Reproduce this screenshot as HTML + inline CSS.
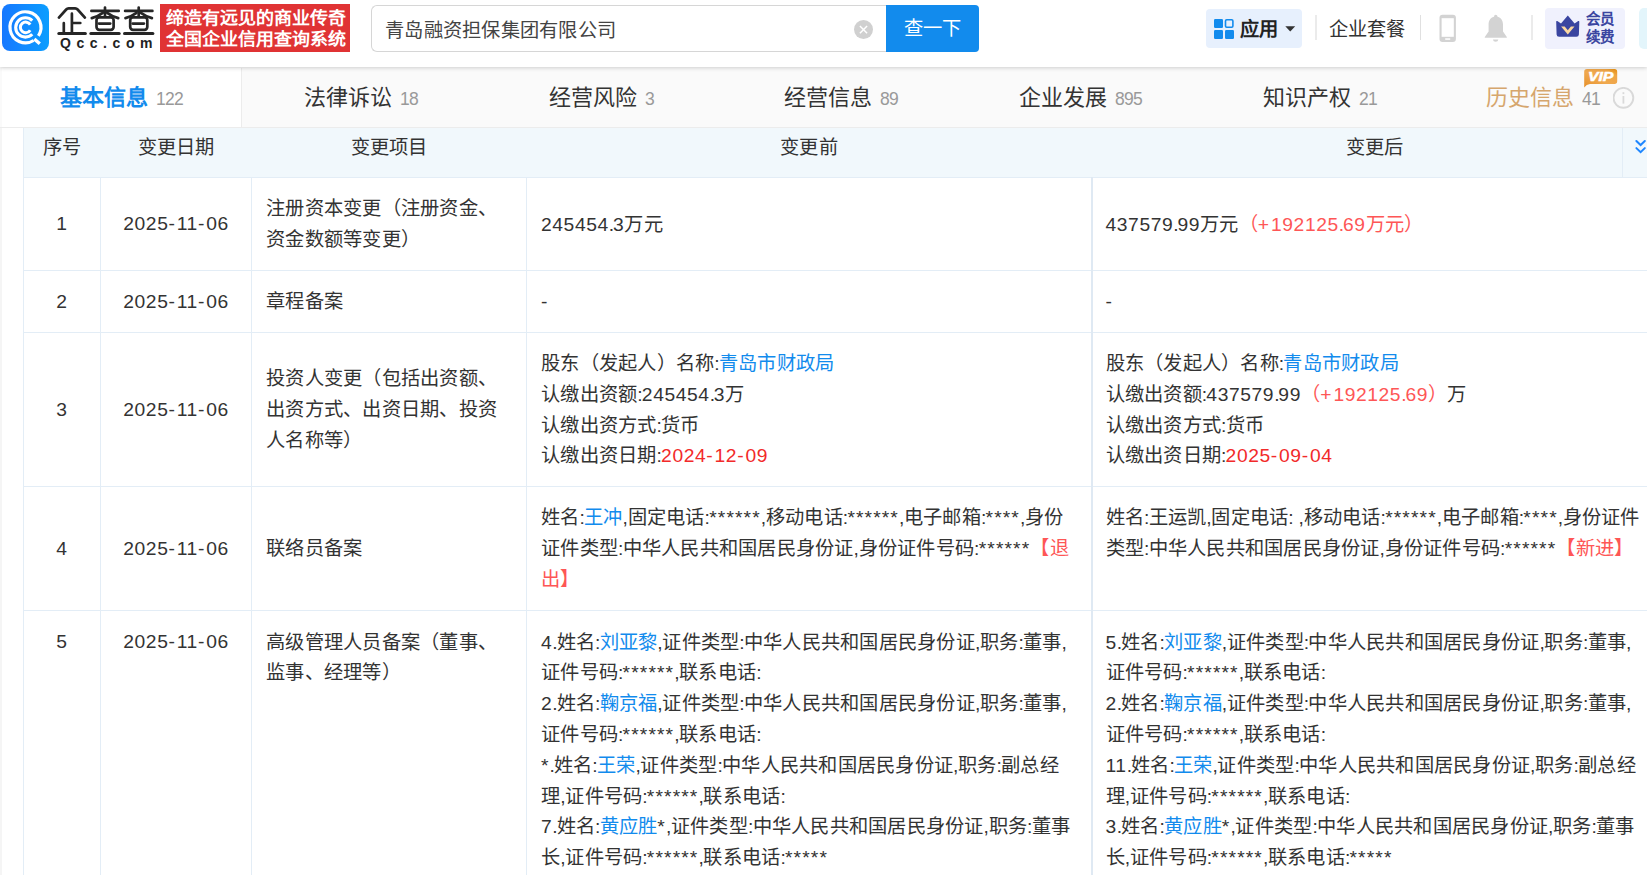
<!DOCTYPE html>
<html lang="zh-CN">
<head>
<meta charset="utf-8">
<title>qcc</title>
<style>
*{box-sizing:border-box;}
html,body{margin:0;padding:0;}
html{overflow:hidden;width:1647px;height:875px;}
#wrap{position:absolute;left:0;top:0;width:1647px;height:875px;overflow:hidden;contain:paint;}
body{width:1647px;height:875px;overflow:hidden;background:#fff;position:relative;
  font-family:"Liberation Sans",sans-serif;color:#333;font-size:19.25px;}
a{color:#128bed;text-decoration:none;}
.r{color:#fe5656;}
.r2{color:#f22a2a;}
i{font-style:normal;}
i.d{letter-spacing:.59px;}
i.h{letter-spacing:1.84px;}
i.u{letter-spacing:1.96px;}
i.p{letter-spacing:-1.15px;}
i.k{letter-spacing:-.75px;}
i.m{letter-spacing:-.35px;}
i.s{letter-spacing:1.1px;}
td.w{white-space:nowrap;}
td.w i{position:relative;top:0;}
/* ---------- header ---------- */
#hd{position:absolute;left:0;top:0;width:1647px;height:67px;background:#fff;z-index:5;
  box-shadow:0 1px 4px rgba(0,0,0,.18);}
#logoicon{position:absolute;left:2px;top:4px;width:47px;height:47px;border-radius:8px;
  background:linear-gradient(90deg,#1778ff 0%,#0b9eff 100%);}
#logotxt{position:absolute;left:56px;top:4px;width:100px;height:36px;font-size:32px;line-height:36px;
  font-weight:700;color:#2b2b2b;letter-spacing:0.5px;white-space:nowrap;transform:scaleY(.92);transform-origin:0 50%;}
#logosub{position:absolute;left:60px;top:35px;font-size:14px;line-height:16px;font-weight:bold;color:#222;
  letter-spacing:5.55px;white-space:nowrap;}
#slogan{position:absolute;left:160px;top:4px;width:190px;height:48px;background:#e03334;color:#fff;
  font-family:"Liberation Serif",serif;font-weight:600;font-size:18px;line-height:20.9px;padding:4px 0 0 6px;white-space:nowrap;}
#slogan span{display:block;height:20.9px;transform:scaleY(.92);}
#sbox{position:absolute;left:371px;top:5px;width:516px;height:47px;border:1px solid #d6d6d6;border-right:none;
  border-radius:6px 0 0 6px;background:#fff;}
#sbox span{position:absolute;left:13px;top:1.5px;line-height:45px;font-size:19.25px;color:#444;white-space:nowrap;letter-spacing:.25px;}
#sclear{position:absolute;left:854px;top:19.5px;width:19px;height:19px;border-radius:50%;background:#d0d0d0;}
#sbtn{position:absolute;left:886px;top:5px;width:93px;height:47px;background:#128bed;border-radius:0 4px 4px 0;
  color:#fff;font-size:19.25px;line-height:48px;text-align:center;letter-spacing:.25px;}
#app{position:absolute;left:1206px;top:9px;width:96px;height:39px;background:#e7f0fd;border-radius:4px;}
#app b{position:absolute;left:34px;top:1px;line-height:39px;font-size:19.25px;color:#222;}
.vsep{position:absolute;top:15px;width:1px;height:25px;background:#e0e0e0;}
#pkg{position:absolute;left:1329px;top:10.5px;line-height:38px;font-size:19.25px;color:#333;white-space:nowrap;}
#vipbtn{position:absolute;left:1545px;top:8px;width:80px;height:41px;background:#f0f1fd;border-radius:4px;}
#vipbtn span{position:absolute;left:38px;top:3px;font-size:14.5px;line-height:17.8px;font-weight:bold;color:#3a45a0;width:34px;text-align:center;}
/* ---------- tabs ---------- */
#tabs{position:absolute;left:0;top:67px;width:1647px;height:61px;background:#fafafa;border-bottom:1px solid #ececec;}
.tab{position:absolute;top:1px;height:59px;line-height:60px;font-size:22px;color:#333;white-space:nowrap;}
.tab i{font-style:normal;font-size:17.5px;color:#999;margin-left:8px;letter-spacing:-.7px;}
#tab0{left:2px;width:240px;background:#fff;border-right:1px solid #ececec;color:#128bed;font-weight:bold;}
/* ---------- table ---------- */
#strip{position:absolute;left:0;top:128px;width:23px;height:747px;background:#fff;border-left:2px solid #f5f5f5;}
table{position:absolute;left:23px;top:128px;width:1634px;border-collapse:collapse;table-layout:fixed;}
td,th{border:1px solid #e3edf6;padding:16.5px 14px 13.5px;line-height:30.8px;font-size:19.25px;font-weight:normal;letter-spacing:.25px;
  text-align:left;vertical-align:middle;color:#333;word-break:break-all;}
th{background:#f1f8fc;text-align:center;height:49px;padding:0;line-height:30px;padding-bottom:8px;border-top:none;border-left-color:#f1f8fc;border-right-color:#f1f8fc;}
th:first-child{border-left-color:#e3edf6;}
td.c{text-align:center;padding:16px 0 14px;}
td:nth-child(5){border-left:2px solid #dfe9f3;padding-left:13px;}
tr.top td{vertical-align:top;padding-top:17px;}
tr.top td.c{padding-top:16px;}
</style>
</head>
<body>
<div id="wrap">
<div id="hd">
  <div id="logoicon">
    <svg width="47" height="47" viewBox="0 0 47 47">
      <path d="M36.4 31.84 A15.5 15.5 0 1 0 31.6 36.5" fill="none" stroke="#fff" stroke-width="3.2"/>
      <path d="M32.3 35.0 L37.8 39.8" fill="none" stroke="#fff" stroke-width="3.4"/>
      <path d="M30.26 16.54 A9.7 9.7 0 1 0 30.26 30.26" fill="none" stroke="#fff" stroke-width="3.1"/>
      <path d="M28.19 20.59 A5.3 5.3 0 1 0 28.19 26.21" fill="none" stroke="#fff" stroke-width="3.0"/>
    </svg>
  </div>
  <svg id="logosvg" style="position:absolute;left:50px;top:0" width="112" height="40" viewBox="50 0 112 40" fill="none" stroke="#262626" stroke-width="2.7" stroke-linecap="round" stroke-linejoin="round"><path d="M58.9 17.6 L66.2 9.5 Q67.2 8.4 68.6 8.4 L75.2 8.4 Q76.6 8.4 77.6 9.5 L84.9 17.6"/><path d="M71.9 13.7 L71.9 33.3 M71.9 23 L80.3 23 M63.8 23.2 L63.8 33.3"/><path d="M58.8 33.5 L85.4 33.5" stroke-width="3"/><path d="M91.4 10.9 L118.7 10.9 M105 7.5 L105 16.6"/><path d="M102.8 12.8 Q98 16.4 91.8 18.1 M107.2 12.8 Q112 16.4 118.2 18.1"/><rect x="96.5" y="17.3" width="17.1" height="12.5" rx="2.8"/><path d="M99 23.6 L110.2 23.6"/><path d="M90.8 33.5 L119.2 33.5" stroke-width="3"/><path d="M125.1 10.9 L152.4 10.9 M138.7 7.5 L138.7 16.6"/><path d="M136.5 12.8 Q131.7 16.4 125.5 18.1 M140.9 12.8 Q145.7 16.4 151.9 18.1"/><rect x="130.2" y="17.3" width="17.1" height="12.5" rx="2.8"/><path d="M132.7 23.6 L143.9 23.6"/><path d="M124.5 33.5 L152.9 33.5" stroke-width="3"/></svg>
  <div id="logosub">Qcc.com</div>
  <div id="slogan"><span>缔造有远见的商业传奇</span><span>全国企业信用查询系统</span></div>
  <div id="sbox"><span>青岛融资担保集团有限公司</span></div>
  <div id="sclear"><svg width="19" height="19" viewBox="0 0 19 19"><path d="M5.9 6 L13.1 13.2 M13.1 6 L5.9 13.2" stroke="#fff" stroke-width="1.5"/></svg></div>
  <div id="sbtn">查一下</div>
  <div id="app">
    <svg style="position:absolute;left:8px;top:10px" width="20" height="20" viewBox="0 0 20 20">
      <rect x="0" y="0" width="9" height="9" rx="1.2" fill="#128bed"/>
      <rect x="11.5" y="0.8" width="7.4" height="7.4" rx="1.2" fill="#e7f0fd" stroke="#128bed" stroke-width="1.6"/>
      <rect x="0" y="11" width="9" height="9" rx="1.2" fill="#128bed"/>
      <rect x="11" y="11" width="9" height="9" rx="1.2" fill="#128bed"/>
    </svg>
    <b>应用</b>
    <svg style="position:absolute;left:79px;top:17px" width="11" height="6" viewBox="0 0 11 6"><path d="M0.3 0.2 L10.2 0.2 L5.25 5.4 Z" fill="#333"/></svg>
  </div>
  <div class="vsep" style="left:1315px;width:2px;background:#ebebeb"></div>
  <div id="pkg">企业套餐</div>
  <div class="vsep" style="left:1420px"></div>
  <svg style="position:absolute;left:1439px;top:14px" width="18" height="29" viewBox="0 0 18 29">
    <rect x="0.5" y="0.7" width="16.4" height="27.2" rx="3" fill="#d3d3d3"/>
    <rect x="2.6" y="4.2" width="12.2" height="18.6" fill="#fff"/>
    <rect x="6.2" y="24.3" width="5" height="1.5" fill="#fff"/>
  </svg>
  <svg style="position:absolute;left:1484px;top:14px" width="24" height="29" viewBox="0 0 24 29">
    <circle cx="11.7" cy="2.5" r="1.7" fill="#d3d3d3"/>
    <path d="M11.7 2.6 C6.8 2.6 4.6 6.5 4.6 10.5 L4.6 17.5 L0.8 22.9 L0.8 23.7 L22.8 23.7 L22.8 22.9 L19 17.5 L19 10.5 C19 6.5 16.8 2.6 11.7 2.6 Z" fill="#d3d3d3"/>
    <path d="M8.9 25.4 L14.4 25.4 Q14 27.7 11.65 27.7 Q9.3 27.7 8.9 25.4 Z" fill="#d3d3d3"/>
  </svg>
  <div class="vsep" style="left:1531px;width:2px;background:#ebebeb"></div>
  <div id="vipbtn">
    <svg style="position:absolute;left:10px;top:7px" width="26" height="23" viewBox="0 0 26 23">
      <path d="M12.8 0.6 L19.6 8.6 L23.2 6.1 Q24.4 5.5 24.3 6.9 L23.9 19.4 Q23.8 21.8 21.4 21.8 L4.1 21.8 Q1.7 21.8 1.6 19.4 L1.2 6.9 Q1.1 5.5 2.3 6.1 L6.0 8.6 Z" fill="#3a45a0"/>
      <path d="M6.1 11.4 L9.7 11.4 L12.8 15.3 L15.9 11.4 L19.5 11.4 L12.8 19.6 Z" fill="#fbd8a1"/>
    </svg>
    <span>会员续费</span>
  </div>
  <div style="position:absolute;left:1639px;top:8px;width:8px;height:41px;background:#e3f5fb;border-radius:5px 0 0 5px;"></div>
</div>

<div id="tabs">
  <div class="tab" id="tab0"><span style="position:absolute;left:58px">基本信息<i style="font-weight:normal">122</i></span></div>
  <div class="tab" style="left:304px">法律诉讼<i>18</i></div>
  <div class="tab" style="left:549px">经营风险<i>3</i></div>
  <div class="tab" style="left:784px">经营信息<i>89</i></div>
  <div class="tab" style="left:1019px">企业发展<i>895</i></div>
  <div class="tab" style="left:1263px">知识产权<i>21</i></div>
  <div class="tab" style="left:1486px;color:#d6a66d">历史信息<i>41</i></div>
  <svg style="position:absolute;left:1584px;top:2px" width="34" height="19" viewBox="0 0 34 19">
    <defs><linearGradient id="vg" x1="0" y1="1" x2="1" y2="0"><stop offset="0" stop-color="#e68f28"/><stop offset=".45" stop-color="#f0a94f"/><stop offset=".8" stop-color="#efa546"/><stop offset="1" stop-color="#e8900e"/></linearGradient></defs>
    <path d="M3 0 L30.5 0 Q33.2 0 33.2 2.7 L33.2 12.3 Q33.2 15 30.5 15 L6 15 Q2.5 15.3 0.2 18.6 L0.2 2.8 Q0.2 0 3 0 Z" fill="url(#vg)"/>
    <text x="16.7" y="12.1" text-anchor="middle" font-family="Liberation Sans, sans-serif" font-size="13" font-weight="bold" font-style="italic" fill="#fff" textLength="25.5" lengthAdjust="spacingAndGlyphs" stroke="#fff" stroke-width=".5">VIP</text>
  </svg>
  <svg style="position:absolute;left:1613px;top:20px" width="22" height="22" viewBox="0 0 22 22">
    <circle cx="10.4" cy="10.8" r="9.9" fill="none" stroke="#d9d9d9" stroke-width="1.9"/>
    <rect x="9.5" y="9" width="1.8" height="7.6" fill="#d9d9d9"/><rect x="9.5" y="5.2" width="1.8" height="1.9" fill="#d9d9d9"/>
  </svg>
</div>

<div id="strip"></div>
<table>
<colgroup><col style="width:77px"><col style="width:151px"><col style="width:275px"><col style="width:565px"><col style="width:566px"></colgroup>
<tr><th>序号</th><th>变更日期</th><th>变更项目</th><th>变更前</th><th>变更后</th></tr>
<tr style="height:93px"><td class="c"><i class="d">1</i></td><td class="c"><i class="d">2025</i><i class="h">-</i><i class="d">11</i><i class="h">-</i><i class="d">06</i></td><td>注册资本变更（注册资金、<br>资金数额等变更）</td><td class="w"><i class="d">245454</i><i class="p">.</i><i class="d">3</i>万元</td><td class="w"><i class="d">437579</i><i class="p">.</i><i class="d">99</i>万元<span class="r">（<i class="u">+</i><i class="d">192125</i><i class="p">.</i><i class="d">69</i>万元）</span></td></tr>
<tr style="height:62px"><td class="c"><i class="d">2</i></td><td class="c"><i class="d">2025</i><i class="h">-</i><i class="d">11</i><i class="h">-</i><i class="d">06</i></td><td>章程备案</td><td class="w"><i class="h">-</i></td><td class="w"><i class="h">-</i></td></tr>
<tr style="height:154px"><td class="c"><i class="d">3</i></td><td class="c"><i class="d">2025</i><i class="h">-</i><i class="d">11</i><i class="h">-</i><i class="d">06</i></td><td>投资人变更（包括出资额、<br>出资方式、出资日期、投资<br>人名称等）</td><td class="w">股东（发起人）名称<i class="k">:</i><a>青岛市财政局</a><br>认缴出资额<i class="k">:</i><i class="d">245454</i><i class="p">.</i><i class="d">3</i>万<br>认缴出资方式<i class="k">:</i>货币<br>认缴出资日期<i class="k">:</i><span class="r2"><i class="d">2024</i><i class="h">-</i><i class="d">12</i><i class="h">-</i><i class="d">09</i></span></td><td class="w">股东（发起人）名称<i class="k">:</i><a>青岛市财政局</a><br>认缴出资额<i class="k">:</i><i class="d">437579</i><i class="p">.</i><i class="d">99</i><span class="r">（<i class="u">+</i><i class="d">192125</i><i class="p">.</i><i class="d">69</i>）</span>万<br>认缴出资方式<i class="k">:</i>货币<br>认缴出资日期<i class="k">:</i><span class="r2"><i class="d">2025</i><i class="h">-</i><i class="d">09</i><i class="h">-</i><i class="d">04</i></span></td></tr>
<tr style="height:124px"><td class="c"><i class="d">4</i></td><td class="c"><i class="d">2025</i><i class="h">-</i><i class="d">11</i><i class="h">-</i><i class="d">06</i></td><td>联络员备案</td><td class="w">姓名<i class="k">:</i><a>王冲</a><i class="m">,</i>固定电话<i class="k">:</i><i class="s">******</i><i class="m">,</i>移动电话<i class="k">:</i><i class="s">******</i><i class="m">,</i>电子邮箱<i class="k">:</i><i class="s">****</i><i class="m">,</i>身份<br>证件类型<i class="k">:</i>中华人民共和国居民身份证<i class="m">,</i>身份证件号码<i class="k">:</i><i class="s">******</i><span class="r">【退</span><br><span class="r">出】</span></td><td class="w">姓名<i class="k">:</i>王运凯<i class="m">,</i>固定电话<i class="k">:</i> <i class="m">,</i>移动电话<i class="k">:</i><i class="s">******</i><i class="m">,</i>电子邮箱<i class="k">:</i><i class="s">****</i><i class="m">,</i>身份证件<br>类型<i class="k">:</i>中华人民共和国居民身份证<i class="m">,</i>身份证件号码<i class="k">:</i><i class="s">******</i><span class="r">【新进】</span><br>&nbsp;</td></tr>
<tr class="top" style="height:300px"><td class="c"><i class="d">5</i></td><td class="c"><i class="d">2025</i><i class="h">-</i><i class="d">11</i><i class="h">-</i><i class="d">06</i></td><td>高级管理人员备案（董事、<br>监事、经理等）</td><td class="w"><i class="d">4</i><i class="p">.</i>姓名<i class="k">:</i><a>刘亚黎</a><i class="m">,</i>证件类型<i class="k">:</i>中华人民共和国居民身份证<i class="m">,</i>职务<i class="k">:</i>董事<i class="m">,</i><br>证件号码<i class="k">:</i><i class="s">******</i><i class="m">,</i>联系电话<i class="k">:</i><br><i class="d">2</i><i class="p">.</i>姓名<i class="k">:</i><a>鞠京福</a><i class="m">,</i>证件类型<i class="k">:</i>中华人民共和国居民身份证<i class="m">,</i>职务<i class="k">:</i>董事<i class="m">,</i><br>证件号码<i class="k">:</i><i class="s">******</i><i class="m">,</i>联系电话<i class="k">:</i><br><i class="s">*</i><i class="p">.</i>姓名<i class="k">:</i><a>王荣</a><i class="m">,</i>证件类型<i class="k">:</i>中华人民共和国居民身份证<i class="m">,</i>职务<i class="k">:</i>副总经<br>理<i class="m">,</i>证件号码<i class="k">:</i><i class="s">******</i><i class="m">,</i>联系电话<i class="k">:</i><br><i class="d">7</i><i class="p">.</i>姓名<i class="k">:</i><a>黄应胜</a><i class="s">*</i><i class="m">,</i>证件类型<i class="k">:</i>中华人民共和国居民身份证<i class="m">,</i>职务<i class="k">:</i>董事<br>长<i class="m">,</i>证件号码<i class="k">:</i><i class="s">******</i><i class="m">,</i>联系电话<i class="k">:</i><i class="s">*****</i><br>&nbsp;<br>&nbsp;</td><td class="w"><i class="d">5</i><i class="p">.</i>姓名<i class="k">:</i><a>刘亚黎</a><i class="m">,</i>证件类型<i class="k">:</i>中华人民共和国居民身份证<i class="m">,</i>职务<i class="k">:</i>董事<i class="m">,</i><br>证件号码<i class="k">:</i><i class="s">******</i><i class="m">,</i>联系电话<i class="k">:</i><br><i class="d">2</i><i class="p">.</i>姓名<i class="k">:</i><a>鞠京福</a><i class="m">,</i>证件类型<i class="k">:</i>中华人民共和国居民身份证<i class="m">,</i>职务<i class="k">:</i>董事<i class="m">,</i><br>证件号码<i class="k">:</i><i class="s">******</i><i class="m">,</i>联系电话<i class="k">:</i><br><i class="d">11</i><i class="p">.</i>姓名<i class="k">:</i><a>王荣</a><i class="m">,</i>证件类型<i class="k">:</i>中华人民共和国居民身份证<i class="m">,</i>职务<i class="k">:</i>副总经<br>理<i class="m">,</i>证件号码<i class="k">:</i><i class="s">******</i><i class="m">,</i>联系电话<i class="k">:</i><br><i class="d">3</i><i class="p">.</i>姓名<i class="k">:</i><a>黄应胜</a><i class="s">*</i><i class="m">,</i>证件类型<i class="k">:</i>中华人民共和国居民身份证<i class="m">,</i>职务<i class="k">:</i>董事<br>长<i class="m">,</i>证件号码<i class="k">:</i><i class="s">******</i><i class="m">,</i>联系电话<i class="k">:</i><i class="s">*****</i><br>&nbsp;<br>&nbsp;</td></tr>
</table>
<div style="position:absolute;left:1622px;top:128px;width:25px;height:50px;background:#f1f8fc;border-left:1px solid #e3edf6;border-bottom:1px solid #e3edf6;z-index:2;">
  <svg style="position:absolute;left:12px;top:11px" width="13" height="16" viewBox="0 0 13 16">
    <path d="M1.4 2.0 L5.6 6 L9.8 2.0 M1.4 9.1 L5.6 13.1 L9.8 9.1" fill="none" stroke="#1e86ff" stroke-width="2" stroke-linecap="round" stroke-linejoin="miter"/>
  </svg>
</div>
</div>
</body>
</html>
